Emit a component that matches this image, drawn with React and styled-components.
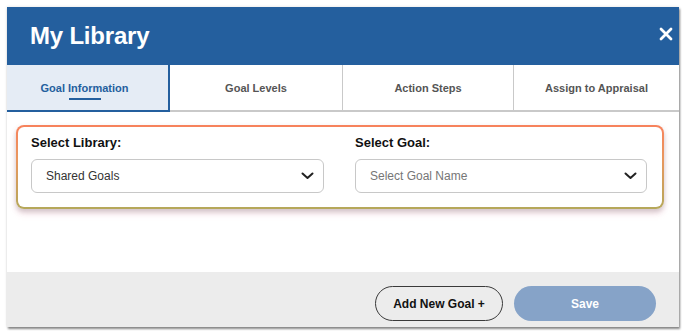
import React from "react";
import styled, { createGlobalStyle } from "styled-components";

const Global = createGlobalStyle`
  html, body { margin: 0; padding: 0; background: #ffffff; }
  body { font-family: "Liberation Sans", Arial, sans-serif; }
  * { box-sizing: border-box; }
`;

const Page = styled.div`
  width: 688px;
  height: 335px;
  padding: 7px 0 0 7px;
`;

const Modal = styled.div`
  width: 672px;
  height: 320px;
  display: flex;
  flex-direction: column;
  background: #fff;
  box-shadow: 1px 2px 2px rgba(0, 0, 0, 0.45), 0 0 3px rgba(0, 0, 0, 0.12);
`;

const Header = styled.div`
  height: 58px;
  background: #245f9e;
  display: flex;
  align-items: center;
  justify-content: space-between;
  padding: 0 6px 0 23px;
`;

const Title = styled.h1`
  margin: 0;
  color: #fff;
  font-size: 24px;
  font-weight: 700;
  letter-spacing: -0.2px;
`;

const Close = styled.button`
  border: 0;
  background: none;
  padding: 0;
  width: 14px;
  height: 14px;
  display: flex;
  margin-top: -4px;
`;

const Tabs = styled.div`
  display: grid;
  grid-template-columns: 163px 173px 171px 165px;
  height: 47px;
`;

const Tab = styled.div`
  display: flex;
  align-items: center;
  justify-content: center;
  font-size: 11px;
  font-weight: 700;
  color: ${(p) => (p.$active ? "#245f9e" : "#555")};
  background: ${(p) => (p.$active ? "#e5ecf5" : "#fff")};
  border-bottom: 2px solid ${(p) => (p.$active ? "#245f9e" : "#c9c9c9")};
  border-right: ${(p) =>
    p.$last ? "none" : p.$active ? "2px solid #245f9e" : "1px solid #c9c9c9"};
  padding: 1px ${(p) => (p.$active ? "6px" : "0")} 0 0;
`;

const TabLabel = styled.span`
  position: relative;
  &::after {
    content: "";
    display: ${(p) => (p.$active ? "block" : "none")};
    position: absolute;
    left: 28px;
    width: 32px;
    bottom: -6px;
    height: 2px;
    background: #245f9e;
  }
`;

const Content = styled.div`
  flex: 1;
  padding: 13px 15px 0 9px;
`;

const Highlight = styled.div`
  height: 84px;
  border: 2px solid transparent;
  border-radius: 8px;
  background: linear-gradient(#fff, #fff) padding-box,
    linear-gradient(180deg, #f7825c 0%, #e9965e 40%, #b5a85a 100%) border-box;
  box-shadow: 0 3px 5px rgba(120, 120, 120, 0.35), 0 5px 6px rgba(255, 170, 200, 0.25);
  display: grid;
  grid-template-columns: 293px 292px;
  column-gap: 31px;
  padding: 8px 0 0 13px;
`;

const Field = styled.div`
  display: flex;
  flex-direction: column;
`;

const Label = styled.label`
  font-size: 13px;
  font-weight: 700;
  color: #111;
  height: 16px;
  line-height: 16px;
  margin-bottom: 8px;
`;

const Select = styled.div`
  height: 34px;
  border: 1px solid #c8c8c8;
  border-radius: 6px;
  display: flex;
  align-items: center;
  justify-content: space-between;
  padding: 0 9px 0 14px;
  font-size: 12px;
  color: ${(p) => (p.$placeholder ? "#767676" : "#333")};
`;

const Footer = styled.div`
  height: 55px;
  background: #ececec;
  display: flex;
  justify-content: flex-end;
  align-items: flex-start;
  gap: 11px;
  padding: 14px 23px 0 0;
`;

const Button = styled.button`
  height: 35px;
  width: ${(p) => p.$w}px;
  border-radius: 18px;
  font-family: "Liberation Sans", Arial, sans-serif;
  font-size: 12px;
  font-weight: 700;
  border: ${(p) => (p.$primary ? "0" : "1px solid #3a3a3a")};
  background: ${(p) => (p.$primary ? "#86a3c8" : "transparent")};
  color: ${(p) => (p.$primary ? "#fff" : "#111")};
`;

const Chevron = () => (
  <svg width="13" height="8" viewBox="0 0 13 8">
    <path d="M1.5 1.5 L6.5 6 L11.5 1.5" fill="none" stroke="#222" strokeWidth="2" strokeLinecap="round" strokeLinejoin="round" />
  </svg>
);

export default function App() {
  const tabs = ["Goal Information", "Goal Levels", "Action Steps", "Assign to Appraisal"];
  return (
    <>
      <Global />
      <Page>
        <Modal>
          <Header>
            <Title>My Library</Title>
            <Close aria-label="Close">
              <svg width="14" height="14" viewBox="0 0 14 14">
                <path d="M2 2 L12 12 M12 2 L2 12" stroke="#fff" strokeWidth="2.8" strokeLinecap="round" />
              </svg>
            </Close>
          </Header>
          <Tabs>
            {tabs.map((t, i) => (
              <Tab key={t} $active={i === 0} $last={i === tabs.length - 1}>
                <TabLabel $active={i === 0}>{t}</TabLabel>
              </Tab>
            ))}
          </Tabs>
          <Content>
            <Highlight>
              <Field>
                <Label>Select Library:</Label>
                <Select>
                  <span>Shared Goals</span>
                  <Chevron />
                </Select>
              </Field>
              <Field>
                <Label>Select Goal:</Label>
                <Select $placeholder>
                  <span>Select Goal Name</span>
                  <Chevron />
                </Select>
              </Field>
            </Highlight>
          </Content>
          <Footer>
            <Button $w={128}>Add New Goal +</Button>
            <Button $w={142} $primary>Save</Button>
          </Footer>
        </Modal>
      </Page>
    </>
  );
}
